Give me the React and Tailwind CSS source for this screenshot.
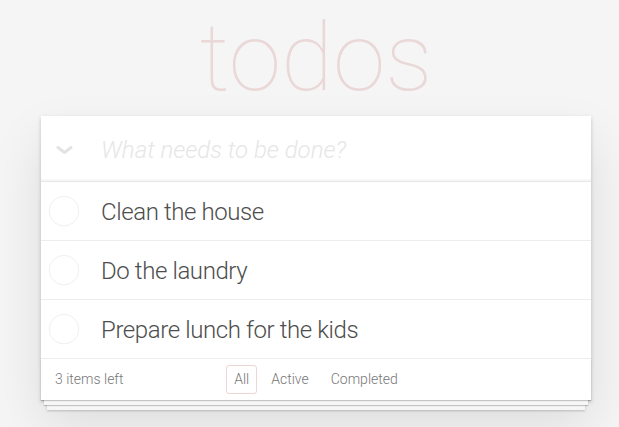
const todos = ['Clean the house', 'Do the laundry', 'Prepare lunch for the kids']

function Circle() {
  return (
    <svg width="40" height="40" viewBox="-10 -18 100 135" className="shrink-0">
      <circle cx="50" cy="50" r="50" fill="none" stroke="#ededed" strokeWidth="3" />
    </svg>
  )
}

export default function App() {
  return (
    <div className="min-h-screen bg-[#f5f5f5] text-[#4d4d4d] font-['Roboto',sans-serif] font-light overflow-hidden">
      <div className="ml-[41px] w-[550px]">
        <h1 className="h-[116px] pt-[10px] text-center text-[95px] leading-[96px] font-thin text-[rgba(175,47,47,0.15)]">
          todos
        </h1>
        <div className="bg-white shadow-[0_2px_4px_0_rgba(0,0,0,0.2),0_25px_50px_0_rgba(0,0,0,0.1)]">
          <div className="flex items-center h-[66px] shadow-[inset_0_-2px_1px_rgba(0,0,0,0.03)] border-b border-[#e6e6e6]">
            <div className="w-[60px] flex pl-[15px] pt-[2px]">
              <svg width="17" height="10" viewBox="0 0 17 10">
                <path d="M2 2.5 L8.5 7.5 L15 2.5" fill="none" stroke="#e3e3e3" strokeWidth="3" strokeLinecap="round" strokeLinejoin="round" />
              </svg>
            </div>
            <span className="text-[24px] italic font-light text-[#e6e6e6] pt-[2px]">What needs to be done?</span>
          </div>
          {todos.map((t) => (
            <div key={t} className="flex items-center h-[59px] border-b border-[#ededed]">
              <Circle />
              <span className="pl-[20px] pt-[3px] text-[24px] leading-[1.2] tracking-[-0.4px]">{t}</span>
            </div>
          ))}
          <div className="grid grid-cols-[1fr_auto_1fr] items-center h-[41px] px-[14px] text-[14px] text-[#777] shadow-[0_1px_1px_rgba(0,0,0,0.2),0_8px_0_-3px_#f6f6f6,0_9px_1px_-3px_rgba(0,0,0,0.2),0_16px_0_-6px_#f6f6f6,0_17px_2px_-6px_rgba(0,0,0,0.2)]">
            <span>3 items left</span>
            <div className="flex items-center">
              <span className="mx-[3px] px-[7px] py-[3px] rounded-[3px] border border-[rgba(175,47,47,0.2)]">All</span>
              <span className="mx-[3px] px-[7px] py-[3px] rounded-[3px] border border-transparent">Active</span>
              <span className="mx-[3px] px-[7px] py-[3px] rounded-[3px] border border-transparent">Completed</span>
            </div>
            <span />
          </div>
        </div>
      </div>
    </div>
  )
}
